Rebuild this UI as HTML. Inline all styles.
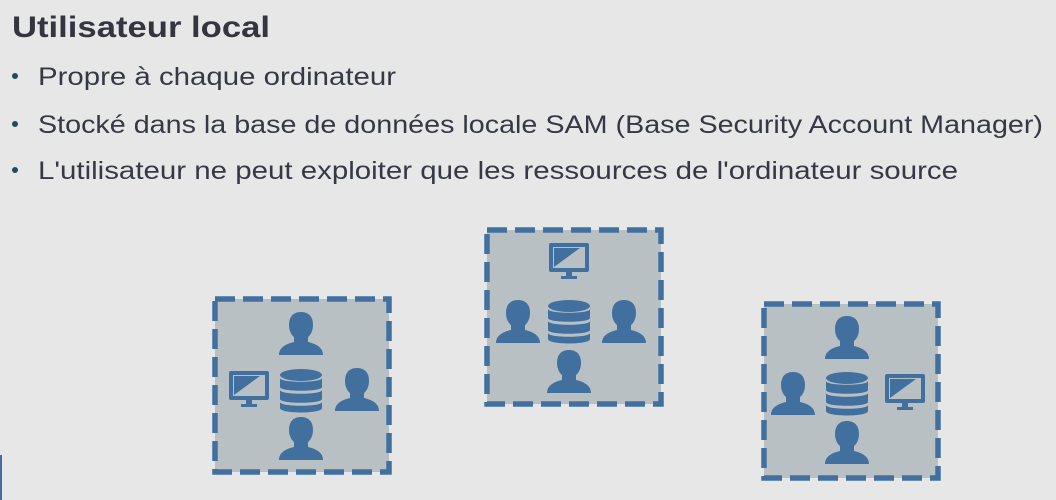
<!DOCTYPE html>
<html><head><meta charset="utf-8"><style>
html,body{margin:0;padding:0;background:#e6e7e6;}
svg{display:block}
</style></head><body>
<svg width="1056" height="500" viewBox="0 0 1056 500" xmlns="http://www.w3.org/2000/svg" font-family="Liberation Sans, sans-serif">
<defs>
<g id="person" fill="#41709f">
<path d="M-12,-17 C-12,-26 -7,-30 0,-30 C7,-30 12,-26 12,-17 C12,-8 6,-2 0,-2 C-6,-2 -12,-8 -12,-17 Z"/>
<path d="M-7,-5 L-7,0 C-16,2 -22,6 -22,13 L22,13 C22,6 16,2 7,0 L7,-5 Z"/>
</g>
<g id="db" fill="#41709f">
<ellipse cx="0" cy="-15" rx="21" ry="6"/>
<path d="M-21,-12 C-21,-7 21,-7 21,-12 L21,-3 C21,2 -21,2 -21,-3 Z"/>
<path d="M-21,0 C-21,5 21,5 21,0 L21,9 C21,14 -21,14 -21,9 Z"/>
<path d="M-21,12 C-21,17 21,17 21,12 L21,18 C21,24 -21,24 -21,18 Z"/>
</g>
<g id="mon">
<rect x="-20" y="-19" width="40" height="29" rx="2" fill="#41709f"/>
<rect x="-16" y="-15" width="32" height="21" fill="#b9c0c3"/>
<path d="M-15,5 L-15,-14 L11,-14 Z" fill="#41709f"/>
<rect x="-3" y="10" width="6" height="5" fill="#41709f"/>
<rect x="-8" y="14" width="16" height="3" fill="#41709f"/>
</g>
</defs>
<text x="12" y="37" font-size="30" font-weight="bold" fill="#343541" textLength="258" lengthAdjust="spacingAndGlyphs">Utilisateur local</text>
<g font-size="25" fill="#363945">
<circle cx="15" cy="76" r="3" fill="#1e4d5f"/>
<text x="38" y="85" textLength="358" lengthAdjust="spacingAndGlyphs">Propre à chaque ordinateur</text>
<circle cx="15" cy="124" r="3" fill="#1e4d5f"/>
<text x="38" y="133" textLength="1005" lengthAdjust="spacingAndGlyphs">Stocké dans la base de données locale SAM (Base Security Account Manager)</text>
<circle cx="15" cy="170" r="3" fill="#1e4d5f"/>
<text x="38" y="179" textLength="920" lengthAdjust="spacingAndGlyphs">L'utilisateur ne peut exploiter que les ressources de l'ordinateur source</text>
</g>
<rect x="0" y="455" width="2" height="45" fill="#41709f"/>
<g fill="#b9c0c3" stroke="#41709f" stroke-width="5.5" stroke-dasharray="20 8">
<rect x="215" y="299" width="174" height="173"/>
<rect x="487" y="230" width="174" height="174"/>
<rect x="764" y="304" width="174" height="174"/>
</g>
<use href="#person" x="301" y="342"/>
<use href="#mon" x="249" y="390"/>
<use href="#db" x="301" y="390"/>
<use href="#person" x="357" y="398"/>
<use href="#person" x="301" y="447"/>
<use href="#mon" x="569" y="262"/>
<use href="#person" x="518" y="330"/>
<use href="#db" x="569" y="321"/>
<use href="#person" x="624" y="330"/>
<use href="#person" x="569" y="380"/>
<use href="#person" x="847" y="346"/>
<use href="#person" x="793" y="402"/>
<use href="#db" x="847" y="393"/>
<use href="#mon" x="905" y="393"/>
<use href="#person" x="847" y="451"/>
</svg>
</body></html>
